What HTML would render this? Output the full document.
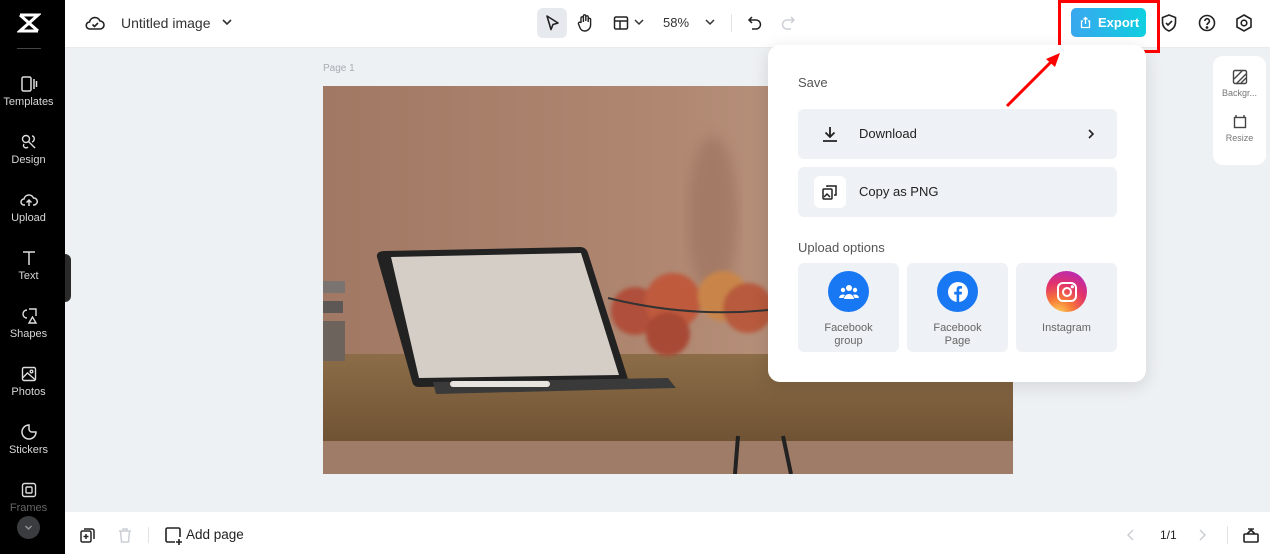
<!DOCTYPE html>
<html><head><meta charset="utf-8"><style>
*{margin:0;padding:0;box-sizing:border-box}
body{width:1270px;height:554px;overflow:hidden;font-family:"Liberation Sans",sans-serif;background:#eef1f4;position:relative;color:#222}
.side{position:absolute;left:0;top:0;width:65px;height:554px;background:#000;color:#ddd}
.side .it{position:absolute;left:0;width:57px;text-align:center;font-size:11px;color:#d8d8d8}
.side svg{display:block;margin:0 auto 3px}
.top{position:absolute;left:65px;top:0;right:0;height:48px;background:#fff;border-bottom:1px solid #e8eaee}
.bot{position:absolute;left:65px;bottom:0;right:0;height:42px;background:#fff}
.ab{position:absolute}
.pop{position:absolute;left:768px;top:45px;width:378px;height:337px;background:#fff;border-radius:12px;box-shadow:0 4px 18px rgba(0,0,0,.12)}
.row{position:absolute;left:30px;width:319px;height:50px;background:#eef1f5;border-radius:6px;font-size:13px;color:#222}
.card{position:absolute;top:218px;width:101px;height:89px;background:#eef1f5;border-radius:6px;text-align:center;font-size:11px;color:#666;line-height:13px}
.card .c{width:41px;height:41px;border-radius:50%;margin:8px auto 10px;display:flex;align-items:center;justify-content:center}
</style></head><body>
<div class="side">
  <svg class="ab" style="left:17px;top:12px" width="24" height="22" viewBox="0 0 24 22"><path d="M3 3h18L3 19h18M3 3l18 16" stroke="#fff" stroke-width="3" fill="none"/></svg>
  <div class="ab" style="left:17px;top:48px;width:24px;height:1px;background:#444"></div>
  <div class="it" style="top:75px"><svg width="18" height="18" viewBox="0 0 18 18" fill="none" stroke="#ddd" stroke-width="1.5"><rect x="2" y="2" width="9" height="14" rx="1.5"/><path d="M14 4v10M16.5 6v6"/></svg>Templates</div>
  <div class="it" style="top:133px"><svg width="18" height="18" viewBox="0 0 18 18" fill="none" stroke="#ddd" stroke-width="1.4"><circle cx="6" cy="6" r="3.5"/><path d="M8 8l7 7M12 3c3 0 3 5 0 6M4 11c-2 3 2 5 4 3"/></svg>Design</div>
  <div class="it" style="top:191px"><svg width="18" height="18" viewBox="0 0 18 18" fill="none" stroke="#ddd" stroke-width="1.5"><path d="M5 14H4a3 3 0 010-6 5 5 0 019.5-1A3.5 3.5 0 0114 14h-1M9 15V9M6.5 11.5L9 9l2.5 2.5"/></svg>Upload</div>
  <div class="it" style="top:249px"><svg width="18" height="18" viewBox="0 0 18 18" fill="none" stroke="#ddd" stroke-width="1.5"><path d="M3 3h12M9 3v13"/></svg>Text</div>
  <div class="it" style="top:307px"><svg width="18" height="18" viewBox="0 0 18 18" fill="none" stroke="#ddd" stroke-width="1.4"><path d="M7 3a4 4 0 100 8M9 2h7v7M9 16l3.5-6 3.5 6z"/></svg>Shapes</div>
  <div class="it" style="top:365px"><svg width="18" height="18" viewBox="0 0 18 18" fill="none" stroke="#ddd" stroke-width="1.4"><rect x="2.5" y="2.5" width="13" height="13" rx="1.5"/><circle cx="11.5" cy="6.5" r="1.3"/><path d="M2.5 13l5-5 8 7"/></svg>Photos</div>
  <div class="it" style="top:423px"><svg width="18" height="18" viewBox="0 0 18 18" fill="none" stroke="#ddd" stroke-width="1.5"><path d="M9 2a7 7 0 107 7h-4a3 3 0 01-3-3z"/></svg>Stickers</div>
  <div class="it" style="top:481px;color:#666"><svg width="18" height="18" viewBox="0 0 18 18" fill="none" stroke="#ddd" stroke-width="1.4"><rect x="2.5" y="2.5" width="13" height="13" rx="2"/><rect x="6" y="6" width="6" height="6" rx="1"/></svg>Frames</div>
  <div class="ab" style="left:17px;top:516px;width:23px;height:23px;border-radius:50%;background:#3a3c40"><svg width="23" height="23" viewBox="0 0 23 23"><path d="M8.5 10l3 3 3-3" stroke="#999" stroke-width="1.3" fill="none"/></svg></div>
</div>
<div class="ab" style="left:65px;top:254px;width:6px;height:48px;background:#2a2a2a;border-radius:0 6px 6px 0"></div>

<div class="top">
  <svg class="ab" style="left:20px;top:14px" width="20" height="18" viewBox="0 0 20 18" fill="none" stroke="#222" stroke-width="1.6"><path d="M5 15h10a4 4 0 000-8 5.5 5.5 0 00-10.5 1A3.5 3.5 0 005 15z"/><path d="M7.5 10.5l2 2 3.5-3.5"/></svg>
  <div class="ab" style="left:56px;top:15px;font-size:14px;color:#333">Untitled image</div>
  <svg class="ab" style="left:156px;top:17px" width="12" height="10" viewBox="0 0 12 10"><path d="M2 3l4 4 4-4" stroke="#333" stroke-width="1.6" fill="none"/></svg>
  <div class="ab" style="left:472px;top:8px;width:30px;height:30px;background:#e6e9ee;border-radius:6px"></div>
  <svg class="ab" style="left:478px;top:14px" width="18" height="18" viewBox="0 0 18 18"><path d="M4 2l11 7-5 1.5-2 5z" stroke="#222" stroke-width="1.6" fill="none" stroke-linejoin="round"/></svg>
  <svg class="ab" style="left:511px;top:13px" width="18" height="19" viewBox="0 0 18 19" fill="none" stroke="#222" stroke-width="1.4"><path d="M5 10V5a1.2 1.2 0 012.4 0v4M7.4 8V3a1.2 1.2 0 012.4 0v5M9.8 8V4a1.2 1.2 0 012.4 0v5M12.2 9V6.5a1.2 1.2 0 012.4 0V12a6 6 0 01-6 6 5 5 0 01-4.5-3L2.5 11a1.3 1.3 0 012.5-1"/></svg>
  <svg class="ab" style="left:547px;top:14px" width="18" height="18" viewBox="0 0 18 18" fill="none" stroke="#222" stroke-width="1.5"><rect x="2.5" y="3" width="13" height="12" rx="1.5"/><path d="M2.5 7h13M8 7v8"/></svg>
  <svg class="ab" style="left:568px;top:17px" width="12" height="10" viewBox="0 0 12 10"><path d="M2 3l4 4 4-4" stroke="#333" stroke-width="1.5" fill="none"/></svg>
  <div class="ab" style="left:598px;top:15px;font-size:13px;color:#333">58%</div>
  <svg class="ab" style="left:639px;top:17px" width="12" height="10" viewBox="0 0 12 10"><path d="M2 3l4 4 4-4" stroke="#333" stroke-width="1.5" fill="none"/></svg>
  <div class="ab" style="left:666px;top:14px;width:1px;height:18px;background:#e2e4e8"></div>
  <svg class="ab" style="left:681px;top:14px" width="18" height="18" viewBox="0 0 18 18" fill="none" stroke="#222" stroke-width="1.5"><path d="M6 3L3 6l3 3M3 6h7a4.5 4.5 0 010 9H6"/></svg>
  <svg class="ab" style="left:714px;top:14px" width="18" height="18" viewBox="0 0 18 18" fill="none" stroke="#ccd0d6" stroke-width="1.5"><path d="M12 3l3 3-3 3M15 6H8a4.5 4.5 0 000 9h4"/></svg>
  <div class="ab" style="left:1006px;top:8px;width:75px;height:29px;border-radius:5px;background:linear-gradient(90deg,#3aa7ef,#0fcfe0);color:#fff;font-size:13px;font-weight:bold;line-height:29px;padding-left:27px">Export</div>
  <svg class="ab" style="left:1014px;top:16px" width="13" height="13" viewBox="0 0 13 13" fill="none" stroke="#fff" stroke-width="1.3"><path d="M4 5H2.5v6.5h8V5H9M6.5 8V1.5M4.5 3.5l2-2 2 2"/></svg>
  <svg class="ab" style="left:1094px;top:13px" width="20" height="20" viewBox="0 0 20 20" fill="none" stroke="#222" stroke-width="1.6"><path d="M10 2l6.5 2.5V9c0 4.5-3 7.5-6.5 9-3.5-1.5-6.5-4.5-6.5-9V4.5z"/><path d="M7 10l2 2 4-4"/></svg>
  <svg class="ab" style="left:1132px;top:13px" width="20" height="20" viewBox="0 0 20 20" fill="none" stroke="#222" stroke-width="1.6"><circle cx="10" cy="10" r="7.5"/><path d="M7.8 8a2.3 2.3 0 114 1.6c-1 .7-1.8 1.2-1.8 2.4"/><circle cx="10" cy="14.5" r=".6" fill="#222"/></svg>
  <svg class="ab" style="left:1169px;top:13px" width="20" height="20" viewBox="0 0 20 20" fill="none" stroke="#222" stroke-width="1.6"><path d="M10 2l7 4v8l-7 4-7-4V6z"/><circle cx="10" cy="10" r="2.8"/></svg>
</div>
<div class="ab" style="left:1058px;top:0;width:102px;height:53px;border:3px solid #f00"></div>

<div class="ab" style="left:323px;top:63px;font-size:10px;color:#a8adb4">Page 1</div>
<svg class="ab" style="left:323px;top:86px" width="690" height="388" viewBox="0 0 690 388">
  <defs>
    <linearGradient id="w" x1="0" y1="0" x2="1" y2="0"><stop offset="0" stop-color="#a07863"/><stop offset=".5" stop-color="#b08872"/><stop offset="1" stop-color="#c4a08c"/></linearGradient>
    <linearGradient id="t" x1="0" y1="0" x2="0" y2="1"><stop offset="0" stop-color="#8c6d48"/><stop offset="1" stop-color="#6f5233"/></linearGradient>
    <filter id="b"><feGaussianBlur stdDeviation="6"/></filter>
    <filter id="b2"><feGaussianBlur stdDeviation="2"/></filter>
  </defs>
  <rect width="690" height="388" fill="url(#w)"/>
  <rect y="268" width="690" height="90" fill="url(#t)"/>
  <rect y="355" width="690" height="33" fill="#9e7c68"/>
  <ellipse cx="390" cy="130" rx="25" ry="80" fill="#8d6350" opacity=".4" filter="url(#b)"/>
  <g filter="url(#b2)"><circle cx="312" cy="225" r="24" fill="#b0503a"/><circle cx="350" cy="215" r="28" fill="#bf5a3e"/><circle cx="400" cy="210" r="25" fill="#c98548"/><circle cx="425" cy="222" r="25" fill="#b85a3c"/><circle cx="345" cy="248" r="22" fill="#a84a34"/></g>
  <path d="M285 212q80 20 160 12" stroke="#333" stroke-width="2" fill="none"/>
  <rect x="0" y="195" width="22" height="12" fill="#7a7370"/><rect x="0" y="215" width="20" height="12" fill="#5d5855"/><rect x="0" y="235" width="22" height="40" fill="#6b635c"/>
  <path d="M125 300l10-50 5 55z" fill="#2c2c2c"/>
  <path d="M62 165l195 -4q6 0 8 6l40 126q2 5-4 5l-205 3q-6 0-7-6l-35-124q-1-6 8-6z" fill="#222"/>
  <path d="M68 171l190-4 38 122-200 3z" fill="#d5cec6"/>
  <path d="M110 296l235-4 8 10-240 6z" fill="#3a3a3a"/>
  <rect x="127" y="295" width="100" height="6" rx="3" fill="#e8e4df"/>
  <path d="M415 350l-3 38M460 350l8 38" stroke="#222" stroke-width="4"/>
</svg>

<div class="pop">
  <div class="ab" style="left:30px;top:30px;font-size:13px;color:#555">Save</div>
  <div class="row" style="top:64px"><svg class="ab" style="left:22px;top:15px" width="20" height="20" viewBox="0 0 20 20" fill="none" stroke="#222" stroke-width="1.8"><path d="M10 3v10M5.5 8.5L10 13l4.5-4.5M3 17h14"/></svg><span class="ab" style="left:61px;top:17px">Download</span><svg class="ab" style="left:288px;top:19px" width="10" height="12" viewBox="0 0 10 12"><path d="M3 2l4 4-4 4" stroke="#222" stroke-width="1.6" fill="none"/></svg></div>
  <div class="row" style="top:122px"><div class="ab" style="left:16px;top:9px;width:32px;height:32px;background:#fff;border-radius:6px"></div><svg class="ab" style="left:23px;top:16px" width="18" height="18" viewBox="0 0 18 18" fill="none" stroke="#222" stroke-width="1.5"><rect x="2" y="6" width="9" height="10" rx="1"/><path d="M6 4V3h9v9h-2"/><path d="M3 14l3-3 3 3"/></svg><span class="ab" style="left:61px;top:17px">Copy as PNG</span></div>
  <div class="ab" style="left:30px;top:195px;font-size:13px;color:#555">Upload options</div>
  <div class="card" style="left:30px"><div class="c" style="background:#1877f2"><svg width="22" height="18" viewBox="0 0 22 18" fill="#fff"><circle cx="11" cy="5" r="3"/><circle cx="5" cy="7" r="2.2"/><circle cx="17" cy="7" r="2.2"/><path d="M6 16a5 5 0 0110 0zM1 15a4 4 0 016-3 6 6 0 00-1.5 3zM21 15a4 4 0 00-6-3 6 6 0 011.5 3z"/></svg></div>Facebook<br>group</div>
  <div class="card" style="left:139px"><div class="c" style="background:#1877f2"><svg width="24" height="24" viewBox="0 0 24 24"><circle cx="12" cy="12" r="10" fill="#fff"/><path d="M13.2 22v-7.5h2.4l.4-2.8h-2.8V10c0-.8.3-1.4 1.4-1.4H16V6.1c-.3 0-1.1-.1-2-.1-2.1 0-3.4 1.2-3.4 3.5v2.2H8.2v2.8h2.4V22z" fill="#1877f2"/></svg></div>Facebook<br>Page</div>
  <div class="card" style="left:248px"><div class="c" style="background:radial-gradient(circle at 30% 105%,#fdd35a 0,#f77737 30%,#e1306c 60%,#b52bb8 90%)"><svg width="24" height="24" viewBox="0 0 24 24" fill="none" stroke="#fff" stroke-width="2"><rect x="3" y="3" width="18" height="18" rx="5"/><circle cx="12" cy="12" r="4"/><circle cx="17.3" cy="6.7" r=".6" fill="#fff"/></svg></div>Instagram</div>
</div>

<svg class="ab" style="left:1000px;top:50px" width="65" height="60" viewBox="0 0 65 60"><path d="M7 56L55 8" stroke="#f00" stroke-width="3"/><path d="M60 3L46 9l9 8z" fill="#f00"/></svg>

<div class="ab" style="left:1213px;top:56px;width:53px;height:109px;background:#fff;border-radius:10px;text-align:center;font-size:9px;color:#777">
  <svg style="display:block;margin:13px auto 3px" width="16" height="16" viewBox="0 0 16 16" fill="none" stroke="#444" stroke-width="1.4"><rect x="1.5" y="1.5" width="13" height="13" rx="1.5"/><path d="M2 10l8-8M5 14l9-9M9 14l5-5"/></svg>Backgr...
  <svg style="display:block;margin:16px auto 3px" width="16" height="16" viewBox="0 0 16 16" fill="none" stroke="#444" stroke-width="1.4"><rect x="2.5" y="3.5" width="11" height="10"/><path d="M4 1v3M12 1v3"/></svg>Resize
</div>

<div class="bot">
  <svg class="ab" style="left:14px;top:14px" width="18" height="18" viewBox="0 0 18 18" fill="none" stroke="#222" stroke-width="1.5"><rect x="2" y="5" width="10" height="11" rx="1.5"/><path d="M5 3h8a2 2 0 012 2v8M7 8v5M4.5 10.5h5"/></svg>
  <svg class="ab" style="left:51px;top:14px" width="18" height="18" viewBox="0 0 18 18" fill="none" stroke="#ccd0d6" stroke-width="1.5"><path d="M3 5h12M7 5V3h4v2M4.5 5l1 11h7l1-11"/></svg>
  <div class="ab" style="left:83px;top:15px;width:1px;height:16px;background:#e2e4e8"></div>
  <svg class="ab" style="left:99px;top:14px" width="20" height="20" viewBox="0 0 20 20" fill="none" stroke="#222" stroke-width="1.6"><path d="M11 16H3.5a1.5 1.5 0 01-1.5-1.5v-11A1.5 1.5 0 013.5 2h11A1.5 1.5 0 0116 3.5V11M15 13v6M12 16h6"/></svg>
  <div class="ab" style="left:121px;top:15px;font-size:13.5px;color:#222">Add page</div>
  <svg class="ab" style="left:1060px;top:15px" width="12" height="16" viewBox="0 0 12 16"><path d="M8 3L3 8l5 5" stroke="#c8ccd2" stroke-width="1.4" fill="none"/></svg>
  <div class="ab" style="left:1095px;top:16px;font-size:12px;color:#222">1/1</div>
  <svg class="ab" style="left:1131px;top:15px" width="12" height="16" viewBox="0 0 12 16"><path d="M4 3l5 5-5 5" stroke="#c8ccd2" stroke-width="1.4" fill="none"/></svg>
  <div class="ab" style="left:1162px;top:14px;width:1px;height:18px;background:#e2e4e8"></div>
  <svg class="ab" style="left:1177px;top:13px" width="18" height="20" viewBox="0 0 18 20" fill="none" stroke="#222" stroke-width="1.6"><rect x="2" y="9" width="14" height="8" rx="1"/><path d="M5 9l4-4 4 4"/><path d="M6 4h6" stroke-width="1.4"/></svg>
</div>
</body></html>
